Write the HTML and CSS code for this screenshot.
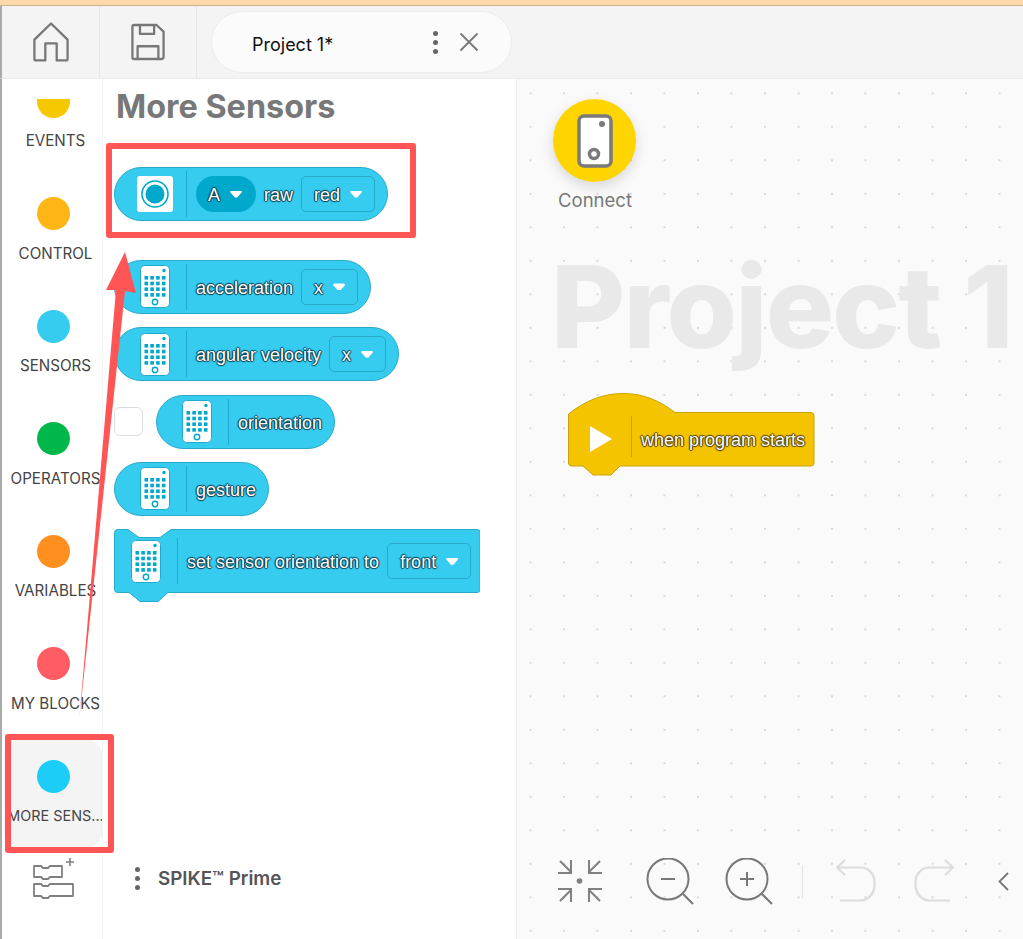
FILE: index.html
```html
<!DOCTYPE html>
<html lang="en">
<head>
<meta charset="utf-8">
<title>SPIKE Prime</title>
<link rel="stylesheet" href="styles.css">
</head>
<body>
<svg class="defs" width="0" height="0" aria-hidden="true">
  <defs>
    <symbol id="hub" viewBox="0 0 30 43">
      <rect x="0.5" y="0.5" width="29" height="42" rx="4" fill="#fff" stroke="#1fa9cb"/>
      <circle cx="24" cy="5.500" r="1.700" fill="#00a8cc"/>
      <circle cx="15" cy="37" r="2.700" fill="none" stroke="#00a8cc" stroke-width="1.400"/>
      <g fill="#00a8cc">
        <rect x="4.500" y="11" width="3.600" height="3.600"/><rect x="10.300" y="11" width="3.600" height="3.600"/><rect x="16.100" y="11" width="3.600" height="3.600"/><rect x="21.900" y="11" width="3.600" height="3.600"/>
        <rect x="4.500" y="16.700" width="3.600" height="3.600"/><rect x="10.300" y="16.700" width="3.600" height="3.600"/><rect x="16.100" y="16.700" width="3.600" height="3.600"/><rect x="21.900" y="16.700" width="3.600" height="3.600"/>
        <rect x="4.500" y="22.400" width="3.600" height="3.600"/><rect x="10.300" y="22.400" width="3.600" height="3.600"/><rect x="16.100" y="22.400" width="3.600" height="3.600"/><rect x="21.900" y="22.400" width="3.600" height="3.600"/>
        <rect x="4.500" y="28.100" width="3.600" height="3.600"/><rect x="10.300" y="28.100" width="3.600" height="3.600"/><rect x="16.100" y="28.100" width="3.600" height="3.600"/><rect x="21.900" y="28.100" width="3.600" height="3.600"/>
      </g>
    </symbol>
  </defs>
</svg>

<div class="strip"></div>

<header class="topbar">
  <button class="tool tool-home">
    <svg width="36" height="40" viewBox="0 0 38 42" fill="none" stroke="#777" stroke-width="2.400" stroke-linejoin="round"><path d="M1.500 18.500 19 1.500l17.500 17V39a1.500 1.500 0 0 1-1.500 1.500H25V22.500H13V40.500H3A1.500 1.500 0 0 1 1.500 39z"/></svg>
  </button>
  <button class="tool">
    <svg width="34" height="38" viewBox="0 0 36 39" fill="none" stroke="#777" stroke-width="2.400" stroke-linejoin="round"><path d="M3 1.500h24l7.500 7V35a2.500 2.500 0 0 1-2.500 2.500H3A1.500 1.500 0 0 1 1.500 36V3A1.500 1.500 0 0 1 3 1.500z"/><path d="M9.500 1.500V11h15V1.500M7 37.500V24h22v13.500"/></svg>
  </button>
  <div class="tab">
    <span class="tab-name">Project 1*</span>
    <span class="tab-dots"><i></i><i></i><i></i></span>
    <svg class="tab-close" width="20" height="20" viewBox="0 0 20 20" stroke="#777" stroke-width="1.800" fill="none"><path d="M1.500 1.500l17 17M18.500 1.500l-17 17"/></svg>
  </div>
</header>

<main class="main">
  <nav class="sidebar">
    <div class="cats">
      <div class="cats-inner">
        <div class="cat"><span class="dot dot-events"></span><span class="cat-label">EVENTS</span></div>
        <div class="cat"><span class="dot dot-control"></span><span class="cat-label">CONTROL</span></div>
        <div class="cat"><span class="dot dot-sensors"></span><span class="cat-label">SENSORS</span></div>
        <div class="cat"><span class="dot dot-operators"></span><span class="cat-label">OPERATORS</span></div>
        <div class="cat"><span class="dot dot-variables"></span><span class="cat-label">VARIABLES</span></div>
        <div class="cat"><span class="dot dot-myblocks"></span><span class="cat-label">MY BLOCKS</span></div>
        <div class="cat cat-active"><span class="dot dot-more"></span><span class="cat-label">MORE SENS...</span></div>
      </div>
    </div>
    <div class="side-foot">
      <svg width="44" height="44" viewBox="0 0 44 44" fill="none" stroke="#808080" stroke-width="1.800" stroke-linejoin="round">
        <path d="M1 11h7l2 2h5l2-2h12v11H17l-2 2h-5l-2-2H1z"/>
        <path d="M1 29h7l2 2h5l2-2h23v12H17l-2 2h-5l-2-2H1z"/>
        <path d="M33 7h8M37 3v8" stroke-width="1.600"/>
      </svg>
    </div>
  </nav>

  <section class="palette">
    <h1 class="pal-title">More Sensors</h1>
    <div class="blocks">
      <div class="block block-first">
        <span class="port-icon"><svg width="30" height="30" viewBox="0 0 30 30"><circle cx="15" cy="15" r="13" fill="none" stroke="#00a8cc" stroke-width="1.600"/><circle cx="15" cy="15" r="9.500" fill="#00a8cc"/></svg></span>
        <span class="sep"></span>
        <span class="pill"><span class="lbl">A</span><span class="caret"></span></span>
        <span class="lbl">raw</span>
        <span class="drop"><span class="lbl">red</span><span class="caret"></span></span>
      </div>
      <div class="block">
        <svg class="hub" width="30" height="43"><use href="#hub"/></svg><span class="sep"></span>
        <span class="lbl">acceleration</span>
        <span class="drop"><span class="lbl">x</span><span class="caret"></span></span>
      </div>
      <div class="block">
        <svg class="hub" width="30" height="43"><use href="#hub"/></svg><span class="sep"></span>
        <span class="lbl">angular velocity</span>
        <span class="drop"><span class="lbl">x</span><span class="caret"></span></span>
      </div>
      <div class="row">
        <span class="check"></span>
        <div class="block">
          <svg class="hub" width="30" height="43"><use href="#hub"/></svg><span class="sep"></span>
          <span class="lbl">orientation</span>
        </div>
      </div>
      <div class="block">
        <svg class="hub" width="30" height="43"><use href="#hub"/></svg><span class="sep"></span>
        <span class="lbl">gesture</span>
      </div>
      <div class="stack">
        <svg class="stack-shape" width="366" height="73" viewBox="0 0 366 73"><path d="M3.500.5h10.500l11 8h21l11-8h306a3 3 0 0 1 3 3v57a3 3 0 0 1-3 3H54l-10 9H26l-11-9H3.500a3 3 0 0 1-3-3v-57a3 3 0 0 1 3-3z" fill="#36ccf0" stroke="#2ba9c9"/></svg>
        <svg class="hub" width="30" height="43"><use href="#hub"/></svg><span class="sep"></span>
        <span class="lbl">set sensor orientation to</span>
        <span class="drop"><span class="lbl">front</span><span class="caret"></span></span>
      </div>
    </div>
    <div class="pal-foot">
      <span class="foot-dots"><i></i><i></i><i></i></span>
      <span class="foot-name">SPIKE™ Prime</span>
    </div>
  </section>

  <section class="canvas">
    <div class="ghost-title">Project 1</div>
    <div class="connect">
      <span class="connect-btn">
        <svg width="36" height="54" viewBox="0 0 36 54"><rect x="2" y="2" width="32" height="50" rx="5" fill="#fff" stroke="#7a7a7a" stroke-width="3.500"/><circle cx="25" cy="10" r="3" fill="#7a7a7a"/><circle cx="17" cy="40" r="4.500" fill="none" stroke="#7a7a7a" stroke-width="3.500"/></svg>
      </span>
      <span class="connect-label">Connect</span>
    </div>
    <div class="hat">
      <svg class="hat-shape" width="247" height="83" viewBox="0 0 247 83"><path d="M.5 21C18 7 36 .5 55 .5 76 .5 92 8 107 19.500h136a3 3 0 0 1 3 3V70a3 3 0 0 1-3 3H52l-9 9H25l-10-9H3.500a3 3 0 0 1-3-3z" fill="#f5c400" stroke="#c9a406"/></svg>
      <svg class="hat-play" width="22" height="26" viewBox="0 0 22 26"><path d="M0 0l22 13L0 26z" fill="#fff"/></svg>
      <span class="hat-sep"></span>
      <span class="hat-label">when program starts</span>
    </div>
    <div class="controls">
      <svg class="c-fit" width="44" height="44" viewBox="0 0 44 44" fill="none" stroke="#808080" stroke-width="2"><path d="M13 1v13H0M2 2l11 11M31 1v13h13M42 2L31 13M13 43V30H0M2 42l11-11M31 43V30h13M42 42L31 31"/><circle cx="21.500" cy="22" r="2.800" fill="#808080" stroke="none"/></svg>
      <svg class="c-zoom" width="48" height="48" viewBox="0 0 48 48" fill="none" stroke="#777" stroke-width="2"><circle cx="22" cy="21" r="20.500"/><path d="M37 36l10 10M15 21h14"/></svg>
      <svg class="c-zoom" width="48" height="48" viewBox="0 0 48 48" fill="none" stroke="#777" stroke-width="2"><circle cx="22" cy="21" r="20.500"/><path d="M37 36l10 10M15 21h14M22 14v14"/></svg>
      <span class="c-sep"></span>
      <svg class="c-undo" width="40" height="44" viewBox="0 0 40 44" fill="none" stroke="#dcdcdc" stroke-width="2.200"><path d="M9 2L1 9.500l8 7.500M1 9.500h24a13.500 15 0 0 1 13.500 16 14 16 0 0 1-13.500 17H4"/></svg>
      <svg class="c-redo" width="40" height="44" viewBox="0 0 40 44" fill="none" stroke="#dcdcdc" stroke-width="2.200"><path d="M31 2l8 7.500-8 7.500M39 9.500H15a13.500 15 0 0 0-13.500 16 14 16 0 0 0 13.500 17h21"/></svg>
      <svg class="c-chev" width="11" height="19" viewBox="0 0 11 19" fill="none" stroke="#777" stroke-width="1.800"><path d="M10 1L1.500 9.500 10 18"/></svg>
    </div>
  </section>
</main>

<div class="mark mark-top"></div>
<div class="mark mark-side"></div>
<svg class="mark-arrow" width="70" height="480" viewBox="0 0 70 480"><path d="M51 0l11 41-11-2L5.500 465 42 38H32z" fill="#ff5555"/></svg>
</body>
</html>
```

FILE: styles.css
```css
* { box-sizing: border-box; }

html, body {
  margin: 0;
  height: 939px;
  overflow: hidden;
}

body {
  position: relative;
  display: flex;
  flex-direction: column;
  background: #fff;
  font-family: Inter, "Open Sans", sans-serif;
}

.defs { position: absolute; }

.strip {
  height: 6px;
  background: #fdd9a9;
  border-bottom: 1px solid #c9b191;
  flex: none;
}

.topbar {
  flex: none;
  height: 73px;
  display: flex;
  align-items: center;
  background: #f4f4f4;
  border-left: 2px solid #aaa;
  border-bottom: 1px solid #ebebeb;
}

.tool {
  width: 97px;
  height: 72px;
  padding: 0;
  display: flex;
  align-items: center;
  justify-content: center;
  background: none;
  border: 0;
  border-right: 1px solid #e8e8e8;
}

.tool-home { width: 98px; }

.tab {
  width: 301px;
  height: 62px;
  margin-left: 14px;
  display: flex;
  align-items: center;
  background: #fbfbfb;
  border: 1px solid #ececec;
  border-radius: 31px;
}

.tab-name {
  margin-left: 40px;
  padding-top: 5px;
  width: 181px;
  font-size: 18px;
  color: #111;
}

.tab-dots, .foot-dots {
  display: flex;
  flex-direction: column;
  gap: 4px;
}

.tab-dots i, .foot-dots i {
  width: 5px;
  height: 5px;
  border-radius: 50%;
  background: #666;
}

.tab-close { margin-left: 21px; }

.main {
  flex: 1;
  min-height: 0;
  display: flex;
  border-left: 2px solid #aaa;
}

.sidebar {
  width: 101px;
  flex: none;
  display: flex;
  flex-direction: column;
  border-right: 1px solid #f5f5f5;
}

.cats {
  flex: none;
  height: 754px;
  margin-top: 20px;
  overflow: hidden;
}

.cats-inner { margin-top: -35.5px; }

.cat {
  width: 99px;
  height: 109px;
  margin: 0 0 3.5px 2px;
  padding-top: 21px;
  display: flex;
  flex-direction: column;
  align-items: center;
  border-radius: 18px;
}

.cat-active { background: #f4f4f4; }

.dot {
  flex: none;
  width: 33px;
  height: 33px;
  border-radius: 50%;
}

.dot-events { background: #f5c800; }
.dot-control { background: #ffb515; }
.dot-sensors { background: #36ccf0; }
.dot-operators { background: #00b84a; }
.dot-variables { background: #ff9020; }
.dot-myblocks { background: #ff5c64; }
.dot-more { background: #1ccdf7; }

.cat-label {
  margin-top: 13.5px;
  padding-left: 4px;
  font-size: 15.2px;
  line-height: 20px;
  color: #444;
  white-space: nowrap;
}

.cat-active .cat-label { font-size: 14.4px; }

.side-foot {
  padding: 0 0 0 31px;
  margin-top: 2px;
}

.palette {
  width: 413px;
  flex: none;
  display: flex;
  flex-direction: column;
  padding-left: 11px;
  background: #fff;
}

.pal-title {
  margin: 10px 0 42px 2px;
  font-size: 32.4px;
  line-height: 36px;
  font-weight: 700;
  color: #787878;
  white-space: nowrap;
}

.blocks {
  display: flex;
  flex-direction: column;
  align-items: flex-start;
  gap: 13.3px;
}

.block {
  height: 54px;
  display: flex;
  align-items: center;
  padding: 0 12px 0 25px;
  background: #36ccf0;
  border: 1px solid #2ba9c9;
  border-radius: 27px;
}

.block-first {
  margin-bottom: 25.7px;
  padding-left: 22px;
}

.hub { flex: none; }

.port-icon {
  width: 36px;
  height: 36px;
  display: flex;
  align-items: center;
  justify-content: center;
  background: #fff;
  border-radius: 3px;
}

.sep {
  flex: none;
  width: 1px;
  height: 46px;
  margin: 0 9px 0 16px;
  background: #1fa9cb;
}

.block-first .sep { margin-left: 13px; }

.lbl {
  padding-top: 3px;
  font-family: "Liberation Sans", Arial, sans-serif;
  font-size: 18px;
  color: #fff;
  white-space: nowrap;
  text-shadow: 1px 0 1px #03384a, -1px 0 1px #03384a, 0 1px 1px #03384a, 0 -1px 1px #03384a;
}

.pill {
  height: 36px;
  display: flex;
  align-items: center;
  margin-right: 8px;
  padding: 0 14px 0 12px;
  background: #00a8cc;
  border-radius: 18px;
}

.drop {
  height: 36px;
  display: flex;
  align-items: center;
  margin-left: 8px;
  padding: 0 12px;
  background: #36ccf0;
  border: 1px solid #2ba9c9;
  border-radius: 5px;
}

.caret {
  width: 12px;
  height: 7px;
  margin-left: 10px;
  background: #fff;
  clip-path: polygon(8% 0, 92% 0, 100% 22%, 60% 100%, 40% 100%, 0 22%);
}

.row {
  display: flex;
  align-items: center;
  gap: 13px;
}

.check {
  width: 29px;
  height: 29px;
  background: #fff;
  border: 1px solid #dcdcdc;
  border-radius: 6px;
}

.stack {
  position: relative;
  width: 366px;
  height: 73px;
  display: flex;
  align-items: center;
  padding: 0 0 9px 17px;
}

.stack-shape {
  position: absolute;
  left: 0;
  top: 0;
}

.stack > :not(.stack-shape) { position: relative; }

.pal-foot {
  margin-top: auto;
  height: 60px;
  margin-left: 21px;
  margin-bottom: 31px;
  display: flex;
  align-items: center;
  gap: 18px;
}

.foot-name {
  font-size: 18.8px;
  font-weight: 600;
  color: #555;
}

.canvas {
  position: relative;
  flex: 1;
  min-width: 0;
  overflow: hidden;
  background-color: #fafafa;
  background-image: radial-gradient(circle, #d8d8d8 1px, transparent 1.3px);
  background-size: 33.5px 33.5px;
  background-position: -3.25px -2.45px;
  border-left: 1px solid #f0f0f0;
}

.ghost-title {
  position: absolute;
  left: 34px;
  top: 155px;
  font-size: 114px;
  line-height: 145px;
  font-weight: 800;
  letter-spacing: -1.8px;
  color: #e9e9e9;
  white-space: nowrap;
}

.connect {
  position: absolute;
  left: 36px;
  top: 20px;
  width: 84px;
  display: flex;
  flex-direction: column;
  align-items: center;
}

.connect-btn {
  width: 83px;
  height: 83px;
  margin-left: -1px;
  display: flex;
  align-items: center;
  justify-content: center;
  background: #ffd500;
  border-radius: 50%;
  box-shadow: 0 5px 14px rgba(0, 0, 0, .14);
}

.connect-label {
  margin-top: 5px;
  font-size: 18.5px;
  line-height: 26px;
  color: #777;
}

.hat {
  position: absolute;
  left: 51px;
  top: 314px;
  width: 247px;
  height: 83px;
}

.hat-shape {
  position: absolute;
  left: 0;
  top: 0;
}

.hat-play {
  position: absolute;
  left: 22px;
  top: 33px;
}

.hat-sep {
  position: absolute;
  left: 63px;
  top: 23px;
  width: 1px;
  height: 41px;
  background: #c9a406;
}

.hat-label {
  position: absolute;
  left: 73px;
  top: 37px;
  font-family: "Liberation Sans", Arial, sans-serif;
  font-size: 18px;
  line-height: 21px;
  color: #fff;
  white-space: nowrap;
  text-shadow: 1px 0 1px #4a3800, -1px 0 1px #4a3800, 0 1px 1px #4a3800, 0 -1px 1px #4a3800;
}

.controls {
  position: absolute;
  left: 41px;
  top: 778px;
  display: flex;
  align-items: flex-start;
}

.c-fit { margin-top: 2px; }
.c-zoom { margin: 1px 0 0 44px; }
.c-zoom + .c-zoom { margin-left: 31px; }

.c-sep {
  width: 1px;
  height: 33px;
  margin: 8px 0 0 29px;
  background: #e2e2e2;
}

.c-undo { margin: 1px 0 0 33px; }
.c-redo { margin: 1px 0 0 38px; }
.c-chev { margin: 15px 0 0 44px; }

.mark {
  position: absolute;
  border: 6px solid #ff5555;
  border-radius: 3px;
}

.mark-top {
  left: 106px;
  top: 143px;
  width: 310px;
  height: 95px;
}

.mark-side {
  left: 5px;
  top: 734px;
  width: 109px;
  height: 119px;
}

.mark-arrow {
  position: absolute;
  left: 74px;
  top: 252px;
}
```
